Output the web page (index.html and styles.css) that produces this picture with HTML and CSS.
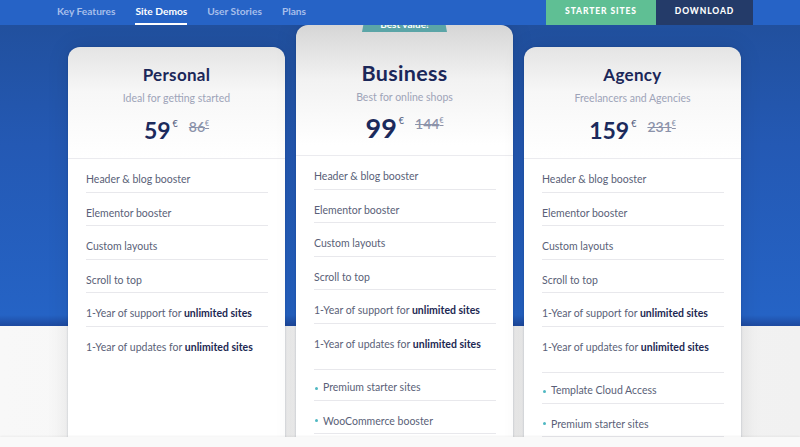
FILE: index.html
```html
<!DOCTYPE html>
<html lang="en">
<head>
<meta charset="utf-8">
<title>Plans</title>
<link rel="stylesheet" href="styles.css">
</head>
<body>
<header class="nav">
  <nav class="links">
    <a class="link">Key Features</a>
    <a class="link active">Site Demos</a>
    <a class="link">User Stories</a>
    <a class="link">Plans</a>
  </nav>
  <div class="actions">
    <a class="btn btn-green">Starter Sites</a>
    <a class="btn btn-dark">Download</a>
  </div>
</header>

<main class="plans">
  <section class="card card-side">
    <div class="head">
      <h2 class="title">Personal</h2>
      <p class="sub">Ideal for getting started</p>
      <div class="price"><span class="now">59</span><span class="cur">€</span><span class="old">86<span class="cur-old">€</span></span></div>
    </div>
    <ul class="feats">
      <li>Header &amp; blog booster</li>
      <li>Elementor booster</li>
      <li>Custom layouts</li>
      <li>Scroll to top</li>
      <li>1-Year of support for <b>unlimited sites</b></li>
      <li>1-Year of updates for <b>unlimited sites</b></li>
    </ul>
  </section>

  <section class="card card-featured">
    <div class="ribbon">Best value!</div>
    <div class="head">
      <h2 class="title">Business</h2>
      <p class="sub">Best for online shops</p>
      <div class="price"><span class="now">99</span><span class="cur">€</span><span class="old">144<span class="cur-old">€</span></span></div>
    </div>
    <ul class="feats">
      <li>Header &amp; blog booster</li>
      <li>Elementor booster</li>
      <li>Custom layouts</li>
      <li>Scroll to top</li>
      <li>1-Year of support for <b>unlimited sites</b></li>
      <li>1-Year of updates for <b>unlimited sites</b></li>
    </ul>
    <ul class="feats extras">
      <li>Premium starter sites</li>
      <li>WooCommerce booster</li>
    </ul>
  </section>

  <section class="card card-side">
    <div class="head">
      <h2 class="title">Agency</h2>
      <p class="sub">Freelancers and Agencies</p>
      <div class="price"><span class="now">159</span><span class="cur">€</span><span class="old">231<span class="cur-old">€</span></span></div>
    </div>
    <ul class="feats">
      <li>Header &amp; blog booster</li>
      <li>Elementor booster</li>
      <li>Custom layouts</li>
      <li>Scroll to top</li>
      <li>1-Year of support for <b>unlimited sites</b></li>
      <li>1-Year of updates for <b>unlimited sites</b></li>
    </ul>
    <ul class="feats extras">
      <li>Template Cloud Access</li>
      <li>Premium starter sites</li>
    </ul>
  </section>
</main>

<footer class="strip"></footer>
</body>
</html>
```

FILE: styles.css
```css
* { box-sizing: border-box; }

html, body {
  margin: 0;
  padding: 0;
}

body {
  width: 800px;
  height: 447px;
  overflow: hidden;
  font-family: Lato, "Noto Sans", "Liberation Sans", sans-serif;
  background: #f7f7f7;
}

/* ---------- top nav ---------- */
.nav {
  position: relative;
  z-index: 3;
  height: 25px;
  display: flex;
  align-items: stretch;
  background: #2663c6;
}

.links {
  display: flex;
  gap: 20px;
  padding-left: 57px;
}

.link {
  position: relative;
  display: flex;
  align-items: center;
  padding-bottom: 3px;
  font-size: 10.2px;
  font-weight: 700;
  color: #a7bfeb;
}

.link.active {
  color: #ffffff;
}

.link.active::after {
  content: "";
  position: absolute;
  left: 0;
  right: 0;
  bottom: 0;
  height: 2px;
  background: #ffffff;
}

.actions {
  display: flex;
  margin-left: auto;
  margin-right: 47px;
}

.btn {
  display: flex;
  align-items: center;
  justify-content: center;
  padding-bottom: 3px;
  font-size: 8.5px;
  font-weight: 900;
  letter-spacing: 0.9px;
  text-transform: uppercase;
  color: #ffffff;
}

.btn-green {
  width: 110px;
  background: #5fbf94;
}

.btn-dark {
  width: 97px;
  background: #243b69;
}

/* ---------- plans ---------- */
.plans {
  height: 412px;
  overflow: hidden;
  display: flex;
  align-items: flex-start;
  gap: 11px;
  padding-left: 68px;
  background:
    linear-gradient(to bottom,
      #21509e 0,
      #2459b4 120px,
      #2563c5 290px,
      #1e4ba2 300px,
      #1e4ba2 301px,
      transparent 301px),
    linear-gradient(to right, #f8f8f8 0, #f1f1f1 100%);
}

.card {
  position: relative;
  flex: 0 0 217px;
  height: 440px;
  border-radius: 12px;
  background: linear-gradient(to bottom, #e4e4e4 0, #f7f7f7 45px, #ffffff 110px);
  box-shadow: 0 0 22px rgba(0, 0, 0, 0.10), 0 0 2px rgba(10, 30, 80, 0.25);
}

.card-side {
  margin-top: 22px;
}

.card-featured {
  margin-top: 0;
  background: linear-gradient(to bottom, #d6d6d6 0, #f2f2f2 55px, #ffffff 120px);
}

.ribbon {
  position: absolute;
  top: -14px;
  left: 50%;
  width: 85px;
  height: 21px;
  margin-left: -42.5px;
  background: #5ba5a7;
  clip-path: polygon(4px 0, calc(100% - 4px) 0, 100% 100%, 0 100%);
  color: #ffffff;
  font-size: 10px;
  font-weight: 700;
  text-align: center;
  line-height: 27px;
}

.head {
  padding: 18px 0 14px;
  border-bottom: 1px solid #ebebef;
  text-align: center;
}

.card-featured .head {
  padding: 35px 0 12px;
}

.title {
  margin: 0;
  font-size: 17px;
  line-height: 20px;
  font-weight: 700;
  color: #1b2759;
  letter-spacing: 0.3px;
}

.card-featured .title {
  font-size: 21.5px;
  line-height: 26px;
}

.sub {
  margin: 6px 0 0;
  font-size: 10.5px;
  line-height: 14px;
  color: #9ea4b8;
}

.card-featured .sub {
  margin-top: 4px;
}

.price {
  margin-top: 11px;
  display: flex;
  justify-content: center;
  align-items: flex-start;
  height: 28px;
  color: #1b2a5c;
}

.card-featured .price {
  margin-top: 9px;
  height: 30px;
}

.now {
  font-size: 23px;
  line-height: 28px;
  font-weight: 700;
}

.card-featured .now {
  font-size: 27px;
  line-height: 30px;
}

.cur {
  font-size: 9px;
  line-height: 16px;
  margin-left: 2px;
  color: #505a7c;
}

.old {
  margin-left: 11px;
  font-size: 14px;
  line-height: 22px;
  font-weight: 600;
  color: #8c93aa;
  text-decoration: line-through;
}

.cur-old {
  font-size: 7px;
  vertical-align: top;
  line-height: 14px;
}

.feats {
  list-style: none;
  margin: 0;
  padding: 0 17px 0 18px;
}

.feats li {
  position: relative;
  padding: 14px 0 5.5px;
  line-height: 13px;
  font-size: 10.5px;
  color: #5a5f78;
  border-bottom: 1px solid #e8e8ec;
}

.feats li b {
  font-weight: 700;
  color: #1d2852;
}

.feats li:last-child {
  border-bottom: 0;
}

.extras {
  margin-top: 13px;
}

.extras li {
  padding-left: 9px;
  border-bottom: 1px solid #e8e8ec;
}

.extras li:first-child {
  border-top: 1px solid #e8e8ec;
  padding-top: 11px;
}

.extras li:last-child {
  border-bottom: 1px solid #e8e8ec;
}

.extras li::before {
  content: "";
  position: absolute;
  left: 1px;
  top: 50%;
  margin-top: 2px;
  width: 3px;
  height: 3px;
  border-radius: 50%;
  background: #4fb8c2;
}

.strip {
  position: relative;
  z-index: 3;
  height: 10px;
  background: #f9f9f9;
  box-shadow: 0 -1px 2px rgba(0, 0, 0, 0.05);
}
```
